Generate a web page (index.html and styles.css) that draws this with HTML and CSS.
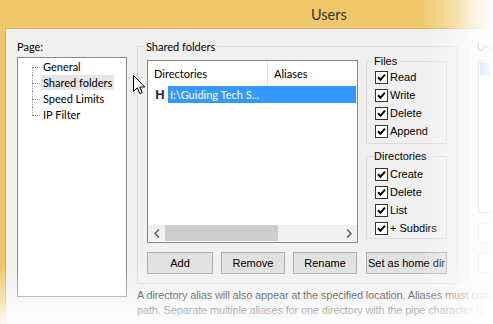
FILE: index.html
```html
<!DOCTYPE html>
<html>
<head>
<meta charset="utf-8">
<link rel="stylesheet" href="styles.css">
</head>
<body>
<div class="window">
  <div class="titlebar"><span class="title">Users</span></div>
  <div class="client">
    <div class="page-col">
      <div class="label">Page:</div>
      <ul class="tree">
        <li><span class="node">General</span></li>
        <li><span class="node sel">Shared folders</span></li>
        <li><span class="node">Speed Limits</span></li>
        <li><span class="node">IP Filter</span></li>
      </ul>
    </div>
    <div class="right-col">
      <div class="groups">
        <fieldset class="group shared">
          <legend>Shared folders</legend>
          <div class="shared-grid">
            <div class="listview">
              <div class="lv-head">
                <div class="col c1">Directories</div>
                <div class="col c2">Aliases</div>
              </div>
              <div class="lv-row">
                <span class="home">H</span>
                <span class="path">I:\Guiding Tech S...</span>
              </div>
              <div class="lv-fill"></div>
              <div class="hscroll">
                <span class="arrow"><svg width="6" height="9" viewBox="0 0 6 9"><polyline points="5,0.5 1,4.5 5,8.5" fill="none" stroke="#606060" stroke-width="1.5"/></svg></span>
                <span class="track"><span class="thumb"></span></span>
                <span class="arrow"><svg width="6" height="9" viewBox="0 0 6 9"><polyline points="1,0.5 5,4.5 1,8.5" fill="none" stroke="#606060" stroke-width="1.5"/></svg></span>
              </div>
            </div>
            <div class="perms">
              <fieldset class="group small files">
                <legend>Files</legend>
                <div class="check"><span class="box"><svg width="9" height="9" viewBox="0 0 9 9"><path d="M1 4.2 L3.4 6.8 L8 1.6" fill="none" stroke="#000" stroke-width="2"/></svg></span>Read</div>
                <div class="check"><span class="box"><svg width="9" height="9" viewBox="0 0 9 9"><path d="M1 4.2 L3.4 6.8 L8 1.6" fill="none" stroke="#000" stroke-width="2"/></svg></span>Write</div>
                <div class="check"><span class="box"><svg width="9" height="9" viewBox="0 0 9 9"><path d="M1 4.2 L3.4 6.8 L8 1.6" fill="none" stroke="#000" stroke-width="2"/></svg></span>Delete</div>
                <div class="check"><span class="box"><svg width="9" height="9" viewBox="0 0 9 9"><path d="M1 4.2 L3.4 6.8 L8 1.6" fill="none" stroke="#000" stroke-width="2"/></svg></span>Append</div>
              </fieldset>
              <fieldset class="group small dirs">
                <legend>Directories</legend>
                <div class="check"><span class="box"><svg width="9" height="9" viewBox="0 0 9 9"><path d="M1 4.2 L3.4 6.8 L8 1.6" fill="none" stroke="#000" stroke-width="2"/></svg></span>Create</div>
                <div class="check"><span class="box"><svg width="9" height="9" viewBox="0 0 9 9"><path d="M1 4.2 L3.4 6.8 L8 1.6" fill="none" stroke="#000" stroke-width="2"/></svg></span>Delete</div>
                <div class="check"><span class="box"><svg width="9" height="9" viewBox="0 0 9 9"><path d="M1 4.2 L3.4 6.8 L8 1.6" fill="none" stroke="#000" stroke-width="2"/></svg></span>List</div>
                <div class="check"><span class="box"><svg width="9" height="9" viewBox="0 0 9 9"><path d="M1 4.2 L3.4 6.8 L8 1.6" fill="none" stroke="#000" stroke-width="2"/></svg></span>+ Subdirs</div>
              </fieldset>
            </div>
            <div class="btnrow">
              <button class="btn add">Add</button>
              <button class="btn rem">Remove</button>
              <button class="btn ren">Rename</button>
            </div>
            <button class="btn home-btn">Set as home dir</button>
          </div>
        </fieldset>
        <fieldset class="group users">
          <legend>Users</legend>
          <div class="ulist"><span class="uitem"></span></div>
          <div class="ubox first"></div>
          <div class="ubox"></div>
        </fieldset>
      </div>
      <div class="note">
        <div>A directory alias will also appear at the specified location. Aliases must contain the full virtual</div>
        <div>path. Separate multiple aliases for one directory with the pipe character (|)</div>
      </div>
    </div>
  </div>
</div>
<svg class="cursor" width="13" height="20" viewBox="0 0 13 20"><path d="M0.5 0.5 L0.5 16.5 L4.3 12.8 L6.8 18.6 L9.2 17.6 L6.8 12 L11.8 12 Z" fill="#fff" stroke="#000" stroke-width="1" stroke-linejoin="round"/></svg>
<div class="fade-right"></div>
<div class="fade-bottom"></div>
</body>
</html>
```
FILE: styles.css
```css
* { box-sizing: border-box; }
html, body { margin: 0; padding: 0; }
body {
  width: 493px;
  height: 324px;
  overflow: hidden;
  position: relative;
  background: #fff;
  font-family: "Lato", "Noto Sans", sans-serif;
  font-size: 11px;
  color: #000;
}
.window {
  width: 620px;
  height: 324px;
  background: #efc86b;
  display: flex;
  flex-direction: column;
}
.titlebar {
  height: 28px;
  flex: none;
  display: flex;
  align-items: center;
  padding-left: 311px;
  font-family: "Lato", sans-serif;
  font-size: 14.5px;
  color: #333;
}
.client {
  flex: 1;
  margin-left: 5px;
  border-top: 1px solid #d9ad55;
  border-left: 1px solid #d9ad55;
  background: #f0f0f0;
  display: grid;
  grid-template-columns: 110px auto;
  column-gap: 10px;
  align-items: start;
  padding: 10px 0 0 11px;
}
.label {
  line-height: 15px;
  margin-bottom: 3px;
}
.tree {
  list-style: none;
  margin: 0;
  padding: 1px 0 0 0;
  height: 240px;
  border: 1px solid #828790;
  background: #fff;
}
.tree li {
  position: relative;
  height: 16px;
  line-height: 16px;
  padding-left: 23px;
}
.tree li::before {
  content: "";
  position: absolute;
  left: 14px;
  width: 8px;
  top: 8px;
  border-top: 1px dotted #a0a0a0;
}
.tree li::after {
  content: "";
  position: absolute;
  left: 14px;
  top: 0;
  bottom: 0;
  border-left: 1px dotted #a0a0a0;
}
.tree li:first-child::after { top: 8px; }
.tree li:last-child::after { bottom: 8px; }
.node {
  display: inline-block;
  padding: 0 2px;
  line-height: 15px;
}
.node.sel { background: #e6e6e6; }

.right-col { display: flex; flex-direction: column; }
.groups { display: flex; gap: 9px; align-items: stretch; }

fieldset.group {
  margin: 0;
  min-width: 0;
  border: 1px solid #dcdcdc;
}
fieldset.group > legend {
  padding: 0 2px;
  margin-left: -3px;
  line-height: 15px;
}
.shared {
  flex: none;
  padding: 0 10px 9px 9px;
}
.shared-grid {
  display: grid;
  grid-template-columns: 211px 81px;
  grid-template-rows: 189px 22px;
  column-gap: 8px;
  row-gap: 9px;
}
.listview {
  margin-top: 6px;
  height: 183px;
  border: 1px solid #828790;
  background: #fff;
  display: flex;
  flex-direction: column;
}
.lv-head {
  height: 25px;
  display: flex;
  flex: none;
}
.col {
  line-height: 25px;
  padding-left: 6px;
}
.c1 { width: 120px; border-right: 1px solid #e5e5e5; }
.c2 { flex: 1; }
.lv-row {
  height: 17px;
  display: flex;
  align-items: stretch;
}
.home {
  width: 20px;
  text-align: center;
  font-family: "Liberation Sans", sans-serif;
  font-weight: bold;
  font-size: 13px;
  line-height: 17px;
  color: #1c2a38;
  padding-left: 4px;
}
.path {
  flex: 1;
  background: #3399ff;
  color: #fff;
  line-height: 17px;
  padding-left: 2px;
  margin-right: 1px;
}
.lv-fill { flex: 1; }
.hscroll {
  height: 16px;
  flex: none;
  display: flex;
  background: #f0f0f0;
  margin-bottom: 1px;
}
.arrow {
  width: 17px;
  display: flex;
  align-items: center;
  justify-content: center;
}
.track { flex: 1; display: flex; }
.thumb { width: 113px; background: #cdcdcd; }

.perms { display: flex; flex-direction: column; gap: 5px; }
fieldset.small {
  padding: 0 0 3px 8px;
}
fieldset.small > legend {
  line-height: 14px;
  margin-left: -2px;
  padding: 0 1px;
  font-family: "Liberation Sans", sans-serif;
}
fieldset.dirs { padding-top: 2px; padding-bottom: 1px; }
.check {
  display: flex;
  align-items: center;
  height: 18px;
  font-family: "Liberation Sans", sans-serif;
  font-size: 11px;
}
.box {
  width: 13px;
  height: 13px;
  border: 1px solid #333;
  background: #fff;
  margin-right: 2px;
  display: flex;
  align-items: center;
  justify-content: center;
}
.btnrow { display: flex; gap: 8px; }
.btn {
  height: 22px;
  border: 1px solid #adadad;
  background: #e1e1e1;
  font-family: "Liberation Sans", sans-serif;
  font-size: 11px;
  color: #000;
  padding: 0;
  margin: 0;
}
.add { width: 66px; }
.rem, .ren { width: 64px; }
.home-btn { width: 81px; }

fieldset.users {
  flex: none;
  width: 110px;
  padding: 0 0 0 10px;
}
.ulist {
  margin-top: 6px;
  height: 153px;
  border: 1px solid #828790;
  background: #fff;
  padding: 1px 0 0 1px;
}
.uitem { display: block; width: 10px; height: 13px; background: #3399ff; }
.ubox {
  margin-top: 10px;
  height: 20px;
  border: 1px solid #adadad;
  background: #fff;
}
.note {
  margin-top: 4px;
  font-family: "Liberation Sans", sans-serif;
  font-size: 11px;
  line-height: 15px;
  white-space: nowrap;
  color: #000;
  letter-spacing: -0.15px;
}
.cursor {
  position: absolute;
  left: 133px;
  top: 75px;
}
.fade-right {
  position: absolute;
  top: 0;
  bottom: 0;
  left: 420px;
  right: 0;
  background: linear-gradient(to right, rgba(255,255,255,0) 0px, rgba(255,255,255,0.35) 30px, rgba(255,255,255,0.8) 55px, rgba(255,255,255,0.97) 73px);
}
.fade-bottom {
  position: absolute;
  left: 0;
  right: 0;
  top: 268px;
  bottom: 0;
  background: linear-gradient(to bottom, rgba(255,255,255,0) 0px, rgba(255,255,255,0.9) 56px);
}
```
